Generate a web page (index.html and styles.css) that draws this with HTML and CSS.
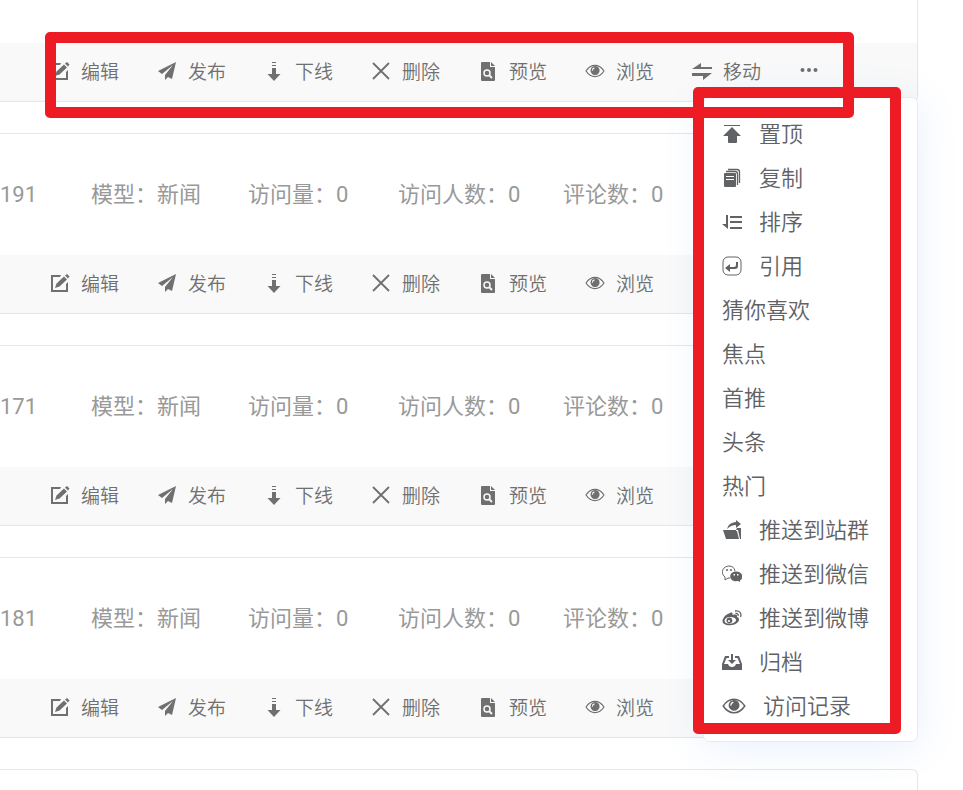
FILE: index.html
```
<!DOCTYPE html>
<html lang="zh-CN">
<head>
    <meta charset="UTF-8">
    <meta name="viewport" content="width=device-width, initial-scale=1.0">
    <title>内容列表</title>
    <link rel="stylesheet" href="styles.css">
</head>
<body>

<!-- 图标 -->
<svg class="sprite" aria-hidden="true">
    <symbol id="i-edit" viewBox="0 0 20 20">
        <path d="M11 2H1v17h17V9l-2 2v6H3V4h7z"/>
        <path d="M5 15l1.500-4.500 7.500-7 3 3-7.500 7zM15 2.500L17 1l2.500 2.500L18 5.500z"/>
    </symbol>
    <symbol id="i-send" viewBox="0 0 20 20">
        <path d="M19 1L1 10l4 3 11-9-8 10v5l3-3 4 2z"/>
    </symbol>
    <symbol id="i-down" viewBox="0 0 20 20">
        <path d="M8 1h4v1H8zM8 4h4v1H8zM8 7h4v6h4.500L10 20l-6.500-7H8z"/>
    </symbol>
    <symbol id="i-close" viewBox="0 0 20 20">
        <path d="M2 2l16 16M18 2L2 18" fill="none" stroke="currentColor" stroke-width="1.800"/>
    </symbol>
    <symbol id="i-preview" viewBox="0 0 20 20">
        <path d="M4 1h8v5h5v13q0 1-1 1H4q-1 0-1-1V2q0-1 1-1z"/>
        <path d="M13 1l4 4h-4z"/>
        <circle cx="9" cy="12" r="3" fill="none" stroke="#f9f9f9" stroke-width="1.500"/>
        <path d="M11 14l3 3" stroke="#f9f9f9" stroke-width="1.800"/>
    </symbol>
    <symbol id="i-eye" viewBox="0 0 20 20">
        <path d="M1 10C6 2.500 14 2.500 19 10 14 17.500 6 17.500 1 10z" fill="none" stroke="currentColor" stroke-width="1.200"/>
        <path fill-rule="evenodd" d="M10 5a4.500 4.500 0 1 0 .1 0zM9 6.300l.8 1q-2 .5-2 2.500l-1-.3q0-2.500 2.200-3.200z"/>
    </symbol>
    <symbol id="i-move" viewBox="0 0 20 20">
        <path d="M0 8l9-6v4h11v2zM20 12l-9 7v-4H0v-3z"/>
    </symbol>
    <symbol id="i-more" viewBox="0 0 20 20">
        <circle cx="3.500" cy="9" r="2"/><circle cx="10" cy="9" r="2"/><circle cx="16.500" cy="9" r="2"/>
    </symbol>
    <symbol id="i-top" viewBox="0 0 20 20">
        <path d="M2 1h16v1H2zM10 3l9 9h-4v6q0 1-1 1H7q-1 0-1-1v-6H1z"/>
    </symbol>
    <symbol id="i-copy" viewBox="0 0 20 20">
        <path fill-rule="evenodd" d="M3 5h10q1 0 1 1v12q0 1-1 1H3q-1 0-1-1V6q0-1 1-1zM4 8v1h8V8zM4 11v1h8v-1z"/>
        <path d="M4 3.500h9q2.500 0 2.500 2.500v11M6 1.500h9q2.500 0 2.500 2.500v11" fill="none" stroke="currentColor" stroke-width="1.300"/>
    </symbol>
    <symbol id="i-sort" viewBox="0 0 20 20">
        <path d="M4 3h2v14L0 12h4zM8 4h12v2H8zM8 9h12v2H8zM8 15h12v2H8z"/>
    </symbol>
    <symbol id="i-quote" viewBox="0 0 20 20">
        <rect x="1" y="1" width="18" height="18" rx="5" fill="none" stroke="currentColor"/>
        <path d="M14 6h2v4q0 3-3 3H8v3l-5-4 5-4v3h4q2 0 2-2z"/>
    </symbol>
    <symbol id="i-share" viewBox="0 0 20 20">
        <path d="M1 10h13v1h1l2 8H4zM5 9q1-6 9-7V0l5 4-5 4V5Q9 5 5 9zM15 8h4v11h-1l-2-9h-2z"/>
    </symbol>
    <symbol id="i-wechat" viewBox="0 0 20 20">
        <path d="M8 14H6l-3 2v-3C-3 8 2 2 7 2q5 0 6 5" fill="none" stroke="currentColor"/>
        <circle cx="5" cy="6" r="1"/><circle cx="9" cy="6" r="1"/>
        <path fill-rule="evenodd" d="M14 7.500c7 0 8 7 4 9V18l-2-1C6 18.500 6 7.500 14 7.500zM11.500 10v1.500H13V10zM15 10v1.500h1.500V10z"/>
    </symbol>
    <symbol id="i-weibo" viewBox="0 0 20 20">
        <path fill-rule="evenodd" d="M8 5c2-1 3 0 2.500 2 4-1 5 0 4.500 2 4 1 2 7-5 8S-1 15 1 11c1-3 4-5 7-6zM8 9c-5 0-7 4-4 6s10 0 10-3c0-2-3-3-6-3z"/>
        <path fill-rule="evenodd" d="M8 9.500a3 3 0 1 0 1 5.500 3 3 0 0 0-1-5.500zM7 12a1 1 0 1 1-.1 2A1 1 0 0 1 7 12z"/>
        <path d="M13 3c4-1 7 2 5.500 6M13.500 5.500c2-.5 3 1 2.500 2.500" fill="none" stroke="currentColor" stroke-width="1.300"/>
    </symbol>
    <symbol id="i-archive" viewBox="0 0 20 20">
        <path d="M0 12h6q1 3 4 3t4-3h6v6H0zM3 4h4v2H4.500L2 12H0zM13 4h4l3 8h-2l-2.500-6H13zM9 2h2v6h3l-4 4-4-4h3z"/>
    </symbol>
</svg>

<main class="list">

    <article class="card card-open">
        <div class="info"></div>
        <div class="actions">
            <button type="button"><svg><use href="#i-edit"/></svg>编辑</button>
            <button type="button"><svg><use href="#i-send"/></svg>发布</button>
            <button type="button"><svg><use href="#i-down"/></svg>下线</button>
            <button type="button"><svg><use href="#i-close"/></svg>删除</button>
            <button type="button"><svg><use href="#i-preview"/></svg>预览</button>
            <button type="button"><svg><use href="#i-eye"/></svg>浏览</button>
            <button type="button"><svg><use href="#i-move"/></svg>移动</button>
            <button type="button" aria-label="更多"><svg><use href="#i-more"/></svg></button>
            <div class="mark mark-actions"></div>
        </div>

        <!-- 更多菜单 -->
        <div class="menu">
            <button type="button"><svg><use href="#i-top"/></svg>置顶</button>
            <button type="button"><svg><use href="#i-copy"/></svg>复制</button>
            <button type="button"><svg><use href="#i-sort"/></svg>排序</button>
            <button type="button"><svg><use href="#i-quote"/></svg>引用</button>
            <button type="button">猜你喜欢</button>
            <button type="button">焦点</button>
            <button type="button">首推</button>
            <button type="button">头条</button>
            <button type="button">热门</button>
            <button type="button"><svg><use href="#i-share"/></svg>推送到站群</button>
            <button type="button"><svg><use href="#i-wechat"/></svg>推送到微信</button>
            <button type="button"><svg><use href="#i-weibo"/></svg>推送到微博</button>
            <button type="button"><svg><use href="#i-archive"/></svg>归档</button>
            <button type="button" class="visits"><svg><use href="#i-eye"/></svg>访问记录</button>
            <div class="mark mark-menu"></div>
        </div>
    </article>

    <article class="card">
        <div class="info">
            <span>191</span>
            <span>模型：新闻</span>
            <span>访问量：0</span>
            <span>访问人数：0</span>
            <span>评论数：0</span>
        </div>
        <div class="actions">
            <button type="button"><svg><use href="#i-edit"/></svg>编辑</button>
            <button type="button"><svg><use href="#i-send"/></svg>发布</button>
            <button type="button"><svg><use href="#i-down"/></svg>下线</button>
            <button type="button"><svg><use href="#i-close"/></svg>删除</button>
            <button type="button"><svg><use href="#i-preview"/></svg>预览</button>
            <button type="button"><svg><use href="#i-eye"/></svg>浏览</button>
        </div>
    </article>

    <article class="card">
        <div class="info">
            <span>171</span>
            <span>模型：新闻</span>
            <span>访问量：0</span>
            <span>访问人数：0</span>
            <span>评论数：0</span>
        </div>
        <div class="actions">
            <button type="button"><svg><use href="#i-edit"/></svg>编辑</button>
            <button type="button"><svg><use href="#i-send"/></svg>发布</button>
            <button type="button"><svg><use href="#i-down"/></svg>下线</button>
            <button type="button"><svg><use href="#i-close"/></svg>删除</button>
            <button type="button"><svg><use href="#i-preview"/></svg>预览</button>
            <button type="button"><svg><use href="#i-eye"/></svg>浏览</button>
        </div>
    </article>

    <article class="card">
        <div class="info">
            <span>181</span>
            <span>模型：新闻</span>
            <span>访问量：0</span>
            <span>访问人数：0</span>
            <span>评论数：0</span>
        </div>
        <div class="actions">
            <button type="button"><svg><use href="#i-edit"/></svg>编辑</button>
            <button type="button"><svg><use href="#i-send"/></svg>发布</button>
            <button type="button"><svg><use href="#i-down"/></svg>下线</button>
            <button type="button"><svg><use href="#i-close"/></svg>删除</button>
            <button type="button"><svg><use href="#i-preview"/></svg>预览</button>
            <button type="button"><svg><use href="#i-eye"/></svg>浏览</button>
        </div>
    </article>

    <article class="card card-next"></article>

</main>

</body>
</html>
```
FILE: styles.css
```
* {
    box-sizing: border-box;
}

body {
    margin: 0;
    background-color: #fff;
    font-family: Roboto, "Noto Sans CJK SC", sans-serif;
    font-weight: 350;
}

button {
    display: flex;
    align-items: center;
    padding: 0 0 4px;
    border: none;
    background: none;
    font: inherit;
    color: inherit;
    white-space: nowrap;
    cursor: pointer;
}

svg {
    flex: none;
    width: 20px;
    height: 20px;
    fill: currentColor;
}

.sprite {
    position: absolute;
    width: 0;
    height: 0;
}

/* 列表卡片 */
.list {
    display: flex;
    flex-direction: column;
    gap: 31px;
    margin-right: 45px;
}

.card {
    border: 1px solid #e6e6e6;
    border-left: none;
    border-radius: 0 6px 6px 0;
}

.info {
    display: grid;
    grid-template-columns: 91px 157px 150px 165px auto;
    align-items: center;
    height: 121px;
    font-size: 22px;
    line-height: 32px;
    font-weight: 400;
    color: #999;
    white-space: nowrap;
}

.actions {
    display: flex;
    gap: 38px;
    height: 58px;
    padding-left: 50px;
    background-color: #f9f9f9;
    border-radius: 0 0 6px 0;
    font-size: 19px;
    color: #707070;
}

.actions button {
    gap: 11px;
}

.actions svg {
    margin-top: 2px;
}

.card-open {
    position: relative;
    border-top: none;
    border-radius: 0 0 6px 0;
}

.card-open .info {
    height: 43px;
}

.card-next {
    height: 21px;
    border-bottom: none;
    border-radius: 0 6px 0 0;
}

/* 更多菜单 */
.menu {
    position: absolute;
    z-index: 1;
    top: 100%;
    right: -1px;
    width: 215px;
    margin-top: -4px;
    padding: 14px 0 13px 18px;
    border: 1px solid #e6ebf5;
    border-radius: 6px;
    background-color: #fff;
    box-shadow: 0 4px 40px rgba(60, 120, 230, 0.12);
    font-size: 22px;
    color: #606266;
}

.menu button {
    gap: 17px;
    height: 44px;
}

.menu svg {
    margin-top: 4px;
}

.menu .visits svg {
    width: 24px;
    height: 24px;
}

/* 红色标注框 */
.mark {
    position: absolute;
    border: 11px solid #ed1c24;
    border-radius: 5px;
    pointer-events: none;
}

.mark-actions {
    z-index: 2;
    top: 32px;
    right: 63px;
    bottom: -17px;
    left: 45px;
}

.mark-menu {
    top: -11px;
    right: 16px;
    bottom: 7px;
    left: -11px;
}
```
